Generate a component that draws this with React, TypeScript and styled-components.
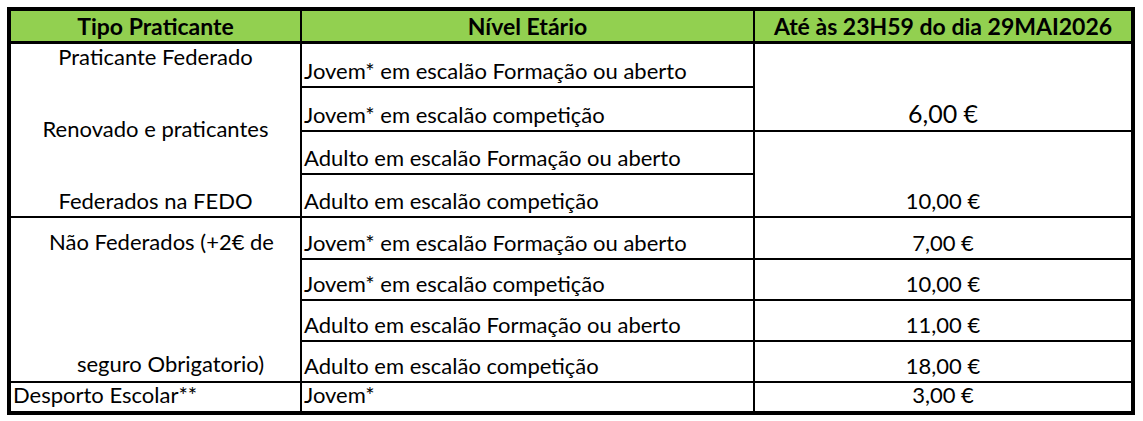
import styled, { createGlobalStyle } from 'styled-components'

const GlobalStyle = createGlobalStyle`
  html, body {
    margin: 0;
    padding: 0;
    background: #fff;
  }
  body {
    font-family: Lato, "Open Sans", "Liberation Sans", sans-serif;
    color: #000;
  }
`

type Level = { label: string }

const federatedLevels: Level[] = [
  { label: 'Jovem* em escalão Formação ou aberto' },
  { label: 'Jovem* em escalão competição' },
  { label: 'Adulto em escalão Formação ou aberto' },
  { label: 'Adulto em escalão competição' },
]

const otherRows = [
  { label: 'Jovem* em escalão Formação ou aberto', price: '7,00 €' },
  { label: 'Jovem* em escalão competição', price: '10,00 €' },
  { label: 'Adulto em escalão Formação ou aberto', price: '11,00 €' },
  { label: 'Adulto em escalão competição', price: '18,00 €' },
]

const App = () => {
  return (
    <>
      <GlobalStyle />
      <Page>
        <PriceTable>
          <HeadCell $col={1}>Tipo Praticante</HeadCell>
          <HeadCell $col={2}>Nível Etário</HeadCell>
          <HeadCell $col={3}>Até às 23H59 do dia 29MAI2026</HeadCell>

          <TypeCell $span={4} $pad="1px 0 3px">
            <TypeLine>Praticante Federado</TypeLine>
            <TypeLine>Renovado e praticantes</TypeLine>
            <TypeLine>Federados na FEDO</TypeLine>
          </TypeCell>
          <LevelCell>{federatedLevels[0].label}</LevelCell>
          <PriceCell $span={2} $big>6,00 €</PriceCell>
          <LevelCell>{federatedLevels[1].label}</LevelCell>
          <LevelCell>{federatedLevels[2].label}</LevelCell>
          <PriceCell $span={2}>10,00 €</PriceCell>
          <LevelCell>{federatedLevels[3].label}</LevelCell>

          <TypeCell $span={4} $pad="12px 0 5px">
            <TypeLine $shift={12}>Não Federados (+2€ de</TypeLine>
            <TypeLine $shift={30}>seguro Obrigatorio)</TypeLine>
          </TypeCell>
          {otherRows.map((row, i) => (
            <>
              <LevelCell key={`l${i}`}>{row.label}</LevelCell>
              <PriceCell key={`p${i}`}>{row.price}</PriceCell>
            </>
          ))}

          <TypeCell $span={1} $pad="0 0 4px 2px" $left $end>
            <TypeLine>Desporto Escolar**</TypeLine>
          </TypeCell>
          <LevelCell $end>Jovem*</LevelCell>
          <PriceCell $end>3,00 €</PriceCell>
        </PriceTable>
      </Page>
    </>
  )
}

const Page = styled.div`
  padding: 7px 0 0 7px;
`

const PriceTable = styled.div`
  display: grid;
  grid-template-columns: 291px 453px 376px;
  grid-template-rows: 33px 44px 44px 43px 43px 42px 41px 41px 41px 28px;
  width: 1120px;
  border: 4px solid #000;
  background: #fff;
  font-size: 22px;
`

const HeadCell = styled.div<{ $col: number }>`
  grid-column: ${p => p.$col};
  display: flex;
  align-items: center;
  justify-content: center;
  background: #92d050;
  font-weight: 700;
  font-size: 23px;
  line-height: 26px;
  border-bottom: 3px solid #000;
  border-right: ${p => (p.$col === 3 ? 'none' : '2px solid #000')};
  padding-bottom: 1px;
`

const TypeCell = styled.div<{ $span: number; $pad: string; $left?: boolean; $end?: boolean }>`
  grid-column: 1;
  grid-row: span ${p => p.$span};
  display: flex;
  flex-direction: column;
  justify-content: ${p => (p.$end ? 'flex-end' : 'space-between')};
  align-items: ${p => (p.$left ? 'flex-start' : 'center')};
  padding: ${p => p.$pad};
  border-right: 2px solid #000;
  border-bottom: ${p => (p.$end ? 'none' : '2px solid #000')};
`

const TypeLine = styled.span<{ $shift?: number }>`
  display: block;
  line-height: 24px;
  padding-left: ${p => p.$shift ?? 0}px;
  white-space: nowrap;
`

const LevelCell = styled.div<{ $end?: boolean }>`
  grid-column: 2;
  display: flex;
  align-items: flex-end;
  padding: 0 0 ${p => (p.$end ? 4 : 3)}px 2px;
  line-height: 24px;
  white-space: nowrap;
  border-right: 2px solid #000;
  border-bottom: ${p => (p.$end ? 'none' : '2px solid #000')};
`

const PriceCell = styled.div<{ $span?: number; $big?: boolean; $end?: boolean }>`
  grid-column: 3;
  grid-row: span ${p => p.$span ?? 1};
  display: flex;
  align-items: flex-end;
  justify-content: center;
  padding-bottom: ${p => (p.$end ? 4 : 3)}px;
  font-size: ${p => (p.$big ? 25 : 22)}px;
  line-height: ${p => (p.$big ? 28 : 24)}px;
  border-bottom: ${p => (p.$end ? 'none' : '2px solid #000')};
`

export default App
